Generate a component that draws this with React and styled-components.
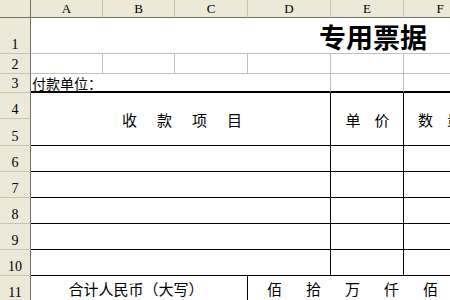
import React from 'react';
import styled, { createGlobalStyle } from 'styled-components';

const COLS = [31, 72, 72, 73, 83, 73, 73];
const ROWS = [18, 36, 20, 19, 26, 27, 26, 26, 26, 26, 26, 26];
const LETTERS = ['A', 'B', 'C', 'D', 'E', 'F'];

const GRID = '#c0c0c0';
const INK = '#000';

const GlobalStyle = createGlobalStyle`
  html, body { margin: 0; padding: 0; background: #fff; }
  body { width: 450px; height: 300px; overflow: hidden; }
`;

const Sheet = styled.div`
  display: grid;
  grid-template-columns: ${COLS.map(c => c + 'px').join(' ')};
  grid-template-rows: ${ROWS.map(r => r + 'px').join(' ')};
  font-family: "Noto Sans CJK SC", sans-serif;
  color: #000;
`;

const Corner = styled.div`
  grid-column: 1;
  grid-row: 1;
  background: #ece9d8;
  border-right: 1px solid #716f64;
  border-bottom: 1px solid #716f64;
  box-sizing: border-box;
`;

const ColHead = styled.div`
  grid-row: 1;
  grid-column: ${p => p.$col};
  background: #ece9d8;
  border-right: 1px solid #c8c4b2;
  border-bottom: 1px solid #716f64;
  box-sizing: border-box;
  display: flex;
  align-items: center;
  justify-content: center;
  font-family: "Liberation Serif", serif;
  font-size: 13px;
  padding-top: 1px;
`;

const RowHead = styled.div`
  grid-column: 1;
  grid-row: ${p => p.$row};
  background: #ece9d8;
  border-right: 1px solid #716f64;
  border-bottom: 1px solid #c8c4b2;
  box-sizing: border-box;
  display: flex;
  align-items: flex-end;
  justify-content: center;
  font-family: "Liberation Serif", serif;
  font-size: 14px;
  line-height: 1;
  padding-bottom: 1px;
`;

const Cell = styled.div`
  grid-column: ${p => p.$col} / span ${p => p.$span || 1};
  grid-row: ${p => p.$row} / span ${p => p.$rows || 1};
  box-sizing: border-box;
  border-right: 1px solid ${p => p.$right || GRID};
  border-bottom: ${p => p.$bw || 1}px solid ${p => p.$bottom || GRID};
  display: flex;
  align-items: ${p => p.$align || 'center'};
  justify-content: ${p => p.$justify || 'center'};
  overflow: visible;
  white-space: nowrap;
`;

const Title = styled.span`
  font-size: 27px;
  font-weight: 700;
  line-height: 1;
  margin-left: 288px;
  margin-bottom: 3px;
`;

const Payer = styled.span`
  font-size: 14px;
  line-height: 1;
  margin-left: 1px;
  margin-bottom: 1px;
`;

const Spaced = styled.span`
  display: flex;
  gap: ${p => p.$gap}px;
  font-size: 15px;
  line-height: 1;
  margin-left: ${p => p.$left || 0}px;
`;

const Label = styled.span`
  font-size: 15px;
  line-height: 1;
  margin-right: 6px;
`;

const spaced = (text, gap, left) => (
  <Spaced $gap={gap} $left={left}>
    {text.split('').map((ch, i) => <span key={i}>{ch}</span>)}
  </Spaced>
);

export default function App() {
  const bodyRows = [6, 7, 8, 9, 10];
  return (
    <>
      <GlobalStyle />
      <Sheet>
        <Corner />
        {LETTERS.map((l, i) => <ColHead key={l} $col={i + 2}>{l}</ColHead>)}
        {ROWS.slice(1).map((_, i) => <RowHead key={i} $row={i + 2}>{i + 1}</RowHead>)}

        {/* row 1: title */}
        <Cell $col={2} $span={6} $row={2} $right="transparent" $align="flex-end" $justify="flex-start">
          <Title>专用票据</Title>
        </Cell>

        {/* row 2: empty cells */}
        {LETTERS.map((l, i) => <Cell key={l} $col={i + 2} $row={3} />)}

        {/* row 3: payer */}
        <Cell $col={2} $span={4} $row={4} $bw={2} $bottom={INK} $align="flex-end" $justify="flex-start">
          <Payer>付款单位：</Payer>
        </Cell>
        <Cell $col={6} $row={4} $bw={2} $bottom={INK} />
        <Cell $col={7} $row={4} $bw={2} $bottom={INK} />

        {/* rows 4-5: heading */}
        <Cell $col={2} $span={4} $row={5} $rows={2} $right={INK} $bottom={INK}>
          {spaced('收款项目', 20, 3)}
        </Cell>
        <Cell $col={6} $row={5} $rows={2} $right={INK} $bottom={INK}>
          {spaced('单价', 14, 1)}
        </Cell>
        <Cell $col={7} $row={5} $rows={2} $right={INK} $bottom={INK}>
          {spaced('数量', 14, 0)}
        </Cell>

        {/* rows 6-10: item lines */}
        {bodyRows.map(r => (
          <React.Fragment key={r}>
            <Cell $col={2} $span={4} $row={r + 1} $right={INK} $bottom={INK} />
            <Cell $col={6} $row={r + 1} $right={INK} $bottom={INK} />
            <Cell $col={7} $row={r + 1} $right={INK} $bottom={INK} />
          </React.Fragment>
        ))}

        {/* row 11: total */}
        <Cell $col={2} $span={3} $row={12} $right={INK} $bottom="transparent">
          <Label>合计人民币（大写）</Label>
        </Cell>
        <Cell $col={5} $span={3} $row={12} $right="transparent" $bottom="transparent" $justify="flex-start">
          {spaced('佰拾万仟佰', 24, 19)}
        </Cell>
      </Sheet>
    </>
  );
}
